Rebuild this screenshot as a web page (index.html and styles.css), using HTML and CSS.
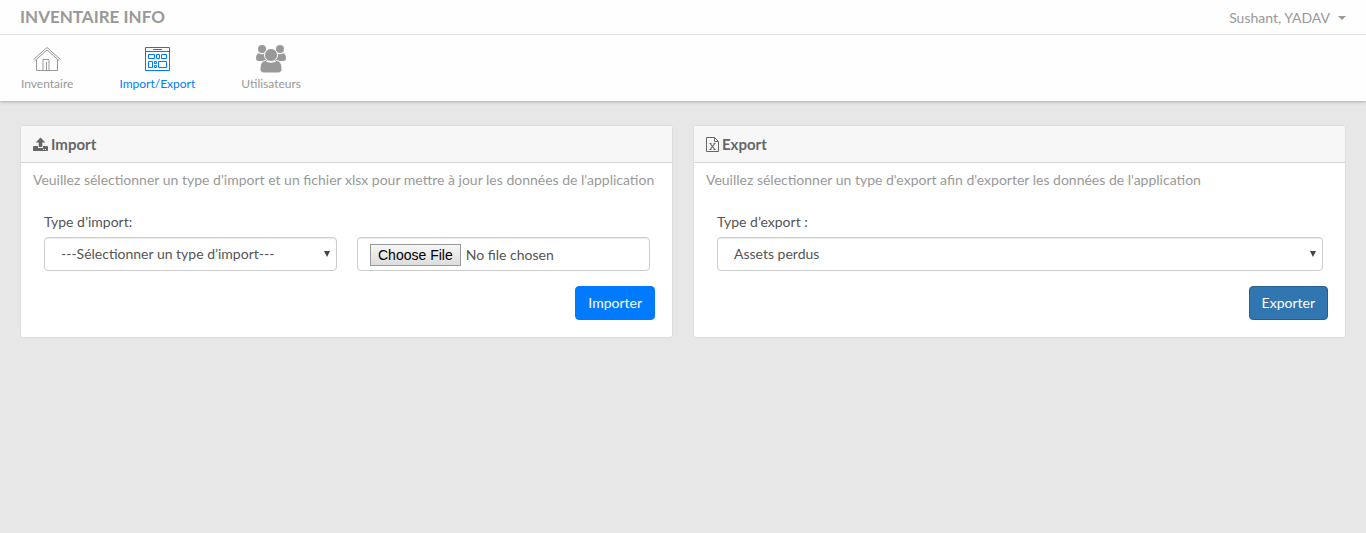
FILE: index.html
```
<!DOCTYPE html>
<html lang="fr">
<head>
<meta charset="utf-8">
<meta name="viewport" content="width=device-width, initial-scale=1">
<title>Inventaire Info</title>
<link rel="stylesheet" href="styles.css">
</head>
<body>
<header class="header">
  <div class="topbar">
    <h1 class="brand">INVENTAIRE INFO</h1>
    <button class="user" type="button">Sushant, YADAV<span class="caret"></span></button>
  </div>
  <nav class="nav">
    <a class="nav-item" href="#">
      <svg class="nav-icon" viewBox="0 0 30 30" fill="none" stroke="currentColor"><path d="M1.500 14.500 15 2.500l13.500 12"/><path d="M2.500 16 15 5l12.500 11"/><path d="M4.500 14.500v11h6.500v-11h6v11h8.500v-11M11 25.500h6M14.500 17v8.500" /></svg>
      <span>Inventaire</span>
    </a>
    <a class="nav-item nav-item-active" href="#">
      <svg class="nav-icon" viewBox="0 0 30 30" fill="none" stroke="currentColor"><path d="M3.500 2.500h24v23h-24zM3.500 6.500h24M11 4.500h9M6.500 9.500h6v4h-6zM14.500 9.500h3v4h-3zM19.500 9.500h5v4h-5zM6.500 16.500h4v6h-4zM12.500 16.500h2v2h-2zM12.500 20.500h2v2h-2zM16.500 16.500h8v6h-8z"/></svg>
      <span>Import/Export</span>
    </a>
    <a class="nav-item" href="#">
      <svg class="nav-icon" viewBox="0 0 30 30" fill="currentColor"><circle cx="6" cy="4" r="4"/><circle cx="24" cy="4" r="4"/><path d="M2.800 8.300q3.200 2 6.500 0L12 16H3q-3 0-3-2.500 0-4.500 2.800-5.200zM27.200 8.300q-3.200 2-6.500 0L18 16h9q3 0 3-2.500 0-4.500-2.800-5.200z"/><g class="halo"><circle cx="15" cy="10" r="6.500"/><path d="M9.500 15.500c2 2.300 9 2.300 11 0 4 0 5.500 4.500 5.500 8.500 0 2.500-1.500 4-4 4H8c-2.500 0-4-1.500-4-4 0-4 1.500-8.500 5.500-8.500z"/></g></svg>
      <span>Utilisateurs</span>
    </a>
  </nav>
</header>
<main class="panels">
  <section class="panel">
    <h2 class="panel-title">
      <svg class="title-icon" viewBox="0 0 15 15" fill="currentColor"><path d="M7.500.5 12.300 5.500H9.300V10H5.700V5.500h-3z"/><path fill-rule="evenodd" d="M.8 9H5v2h5V9h4.200q.8 0 .8.800v3.400q0 .8-.8.800H.8Q0 14 0 13.200V9.800Q0 9 .8 9zM10 12v1h1v-1zm2 0v1h1v-1z"/></svg>
      Import
    </h2>
    <form class="panel-body">
      <p class="intro">Veuillez sélectionner un type d’import et un fichier xlsx pour mettre à jour les données de l'application</p>
      <div class="fields">
        <label class="label" for="import-type">Type d’import:</label>
        <div class="row">
          <div class="select">
            <select class="control" id="import-type"><option>---Sélectionner un type d’import---</option></select>
          </div>
          <input class="control file" type="file" aria-label="Fichier xlsx">
        </div>
      </div>
      <button class="btn btn-import" type="button">Importer</button>
    </form>
  </section>
  <section class="panel">
    <h2 class="panel-title">
      <svg class="title-icon title-icon-file" viewBox="0 0 13 15" fill="none" stroke="currentColor"><path d="M.5.5h8l4 4v10H.500zM8.500.5v4h4"/><path d="m4.500 7 4 5M8.500 7l-4 5" stroke-width="1.200"/><path d="M3.500 6.500h2M7.500 6.500h2M3.500 12.500h2M7.500 12.500h2"/></svg>
      Export
    </h2>
    <form class="panel-body">
      <p class="intro">Veuillez sélectionner un type d'export afin d'exporter les données de l'application</p>
      <div class="fields">
        <label class="label" for="export-type">Type d’export :</label>
        <div class="row row-single">
          <div class="select">
            <select class="control" id="export-type"><option>Assets perdus</option></select>
          </div>
        </div>
      </div>
      <button class="btn btn-export" type="button">Exporter</button>
    </form>
  </section>
</main>
</body>
</html>
```
FILE: styles.css
```
* {
  box-sizing: border-box;
}

body {
  margin: 0;
  background: #e7e7e7;
  color: #555;
  font: 14px/20px Lato, sans-serif;
}

button,
input,
select {
  font: inherit;
}

.header {
  background: #fefefe;
  box-shadow: 0 1px 3px rgba(0, 0, 0, 0.25);
}

.topbar {
  display: flex;
  align-items: center;
  justify-content: space-between;
  height: 35px;
  padding: 0 20px;
  border-bottom: 1px solid #e4e4e4;
}

.brand {
  margin: 0;
  color: #999;
  font-size: 17px;
  font-weight: 700;
}

.user {
  display: flex;
  align-items: center;
  gap: 8px;
  padding: 2px 0 0;
  border: 0;
  background: none;
  color: #999;
}

.caret {
  border: 4px solid transparent;
  border-top-color: currentColor;
  border-bottom: 0;
}

.nav {
  display: flex;
  gap: 46px;
  padding: 10px 21px 8px;
}

.nav-item {
  display: flex;
  flex-direction: column;
  align-items: center;
  color: #999;
  font-size: 12px;
  line-height: 18px;
  text-decoration: none;
}

.nav-item-active {
  color: #007bff;
}

.nav-icon {
  width: 30px;
  height: 30px;
}

.halo {
  stroke: #fefefe;
  stroke-width: 1px;
}

.panels {
  display: grid;
  grid-template-columns: 1fr 1fr;
  gap: 20px;
  padding: 24px 20px;
}

.panel {
  border: 1px solid #ddd;
  border-radius: 3px;
  background: #fff;
  overflow: hidden;
}

.panel-title {
  display: flex;
  align-items: center;
  gap: 3px;
  height: 37px;
  margin: 0;
  padding: 0 12px;
  border-bottom: 1px solid #d5d5d5;
  background: #f7f7f7;
  color: #666;
  font-size: 15px;
  font-weight: 700;
}

.title-icon {
  width: 15px;
  height: 15px;
}

.title-icon-file {
  width: 13px;
}

.panel-body {
  display: flex;
  flex-direction: column;
  padding: 7px 17px 17px 12px;
}

.intro {
  margin: 0 0 22px;
  color: #999;
}

.fields {
  padding: 0 5px 0 11px;
}

.label {
  display: block;
  margin-bottom: 5px;
}

.row {
  display: grid;
  grid-template-columns: 1fr 1fr;
  gap: 20px;
}

.row-single {
  grid-template-columns: 1fr;
}

.select {
  position: relative;
  min-width: 0;
}

.select::after {
  position: absolute;
  top: 14px;
  right: 7px;
  border: 3px solid transparent;
  border-top: 6px solid #444;
  border-bottom: 0;
  content: "";
  pointer-events: none;
}

.control {
  width: 100%;
  height: 34px;
  padding: 0 16px;
  border: 1px solid #ccc;
  border-radius: 4px;
  background: #fff;
  box-shadow: inset 0 1px 1px rgba(0, 0, 0, 0.075);
  color: #555;
  appearance: none;
}

.file {
  min-width: 0;
  padding: 6px 12px;
}

.file::file-selector-button {
  height: 22px;
  margin: 0 5px 0 0;
  padding: 0 7px;
  border: 1px solid #999;
  border-radius: 0;
  background: linear-gradient(#f6f6f6, #ddd);
  color: #000;
  font: 14px/20px "Liberation Sans", Arial, sans-serif;
}

.btn {
  align-self: flex-end;
  height: 34px;
  margin-top: 15px;
  padding: 0 12px;
  border: 1px solid #007bff;
  border-radius: 4px;
  background: #007bff;
  color: #fff;
}

.btn-export {
  border-color: #285e8e;
  background: #3276b1;
}

@media (max-width: 800px) {
  .panels {
    grid-template-columns: 1fr;
  }
}
```
